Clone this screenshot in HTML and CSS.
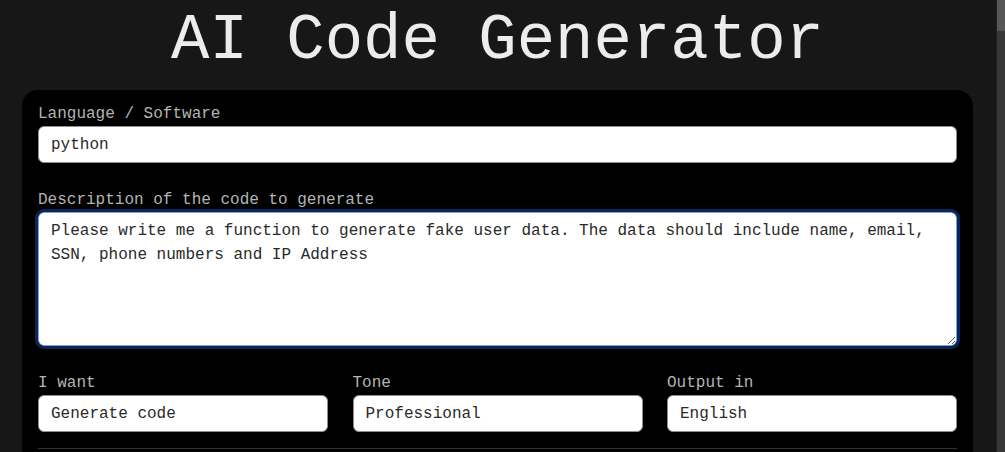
FILE: index.html
```html
<!DOCTYPE html>
<html lang="en">
<head>
<meta charset="utf-8">
<title>AI Code Generator</title>
<link rel="stylesheet" href="styles.css">
</head>
<body>
<main class="page">
  <h1 class="title">AI Code Generator</h1>
  <form class="card">
    <div class="field">
      <label class="label" for="lang">Language / Software</label>
      <input class="input" id="lang" type="text" value="python">
    </div>
    <div class="field">
      <label class="label" for="desc">Description of the code to generate</label>
      <textarea class="textarea" id="desc">Please write me a function to generate fake user data. The data should include name, email, SSN, phone numbers and IP Address</textarea>
    </div>
    <div class="row">
      <div class="field">
        <label class="label" for="want">I want</label>
        <input class="input" id="want" type="text" value="Generate code">
      </div>
      <div class="field">
        <label class="label" for="tone">Tone</label>
        <input class="input" id="tone" type="text" value="Professional">
      </div>
      <div class="field">
        <label class="label" for="out">Output in</label>
        <input class="input" id="out" type="text" value="English">
      </div>
    </div>
    <div class="result"></div>
  </form>
</main>
<div class="scrollbar"><div class="thumb"></div></div>
</body>
</html>
```
FILE: styles.css
```css
html {
  background: #171717;
}
body {
  margin: 0;
  font-family: "Liberation Mono", "Courier New", monospace;
  color: #e8e8e8;
}
.page {
  padding: 5px 32px 0 22px;
}
.title {
  margin: 0;
  font-weight: normal;
  font-size: 64px;
  line-height: 72px;
  text-align: center;
  color: #ececec;
}
.card {
  margin-top: 13px;
  background: #000;
  border-radius: 16px;
  padding: 15px 16px 40px;
  display: flex;
  flex-direction: column;
  gap: 28px;
}
.field {
  display: flex;
  flex-direction: column;
}
.label {
  font-size: 16px;
  line-height: 18px;
  color: #b4b4b4;
  margin-bottom: 3px;
}
.input,
.textarea {
  font-family: "Liberation Mono", "Courier New", monospace;
  font-size: 16px;
  color: #2a2a2a;
  background: #fff;
  border: 1px solid #8f8f8f;
  border-radius: 6px;
  box-sizing: border-box;
  margin: 0;
}
.input {
  height: 37px;
  padding: 0 12px;
}
.textarea {
  height: 134px;
  padding: 6px 12px;
  line-height: 24px;
  border-color: #79a3dc;
  outline: 3px solid #0b2656;
  resize: vertical;
}
.row {
  display: grid;
  grid-template-columns: 1fr 1fr 1fr;
  column-gap: 24.5px;
}
.result {
  margin-top: -12px;
  border-top: 1px solid #333;
  min-height: 6000px;
}
.scrollbar {
  position: fixed;
  top: 0;
  right: 0;
  width: 8px;
  height: 100%;
  background: #383838;
  border-left: 1px solid #222;
}
.thumb {
  height: 31px;
  background: #565656;
}
```
